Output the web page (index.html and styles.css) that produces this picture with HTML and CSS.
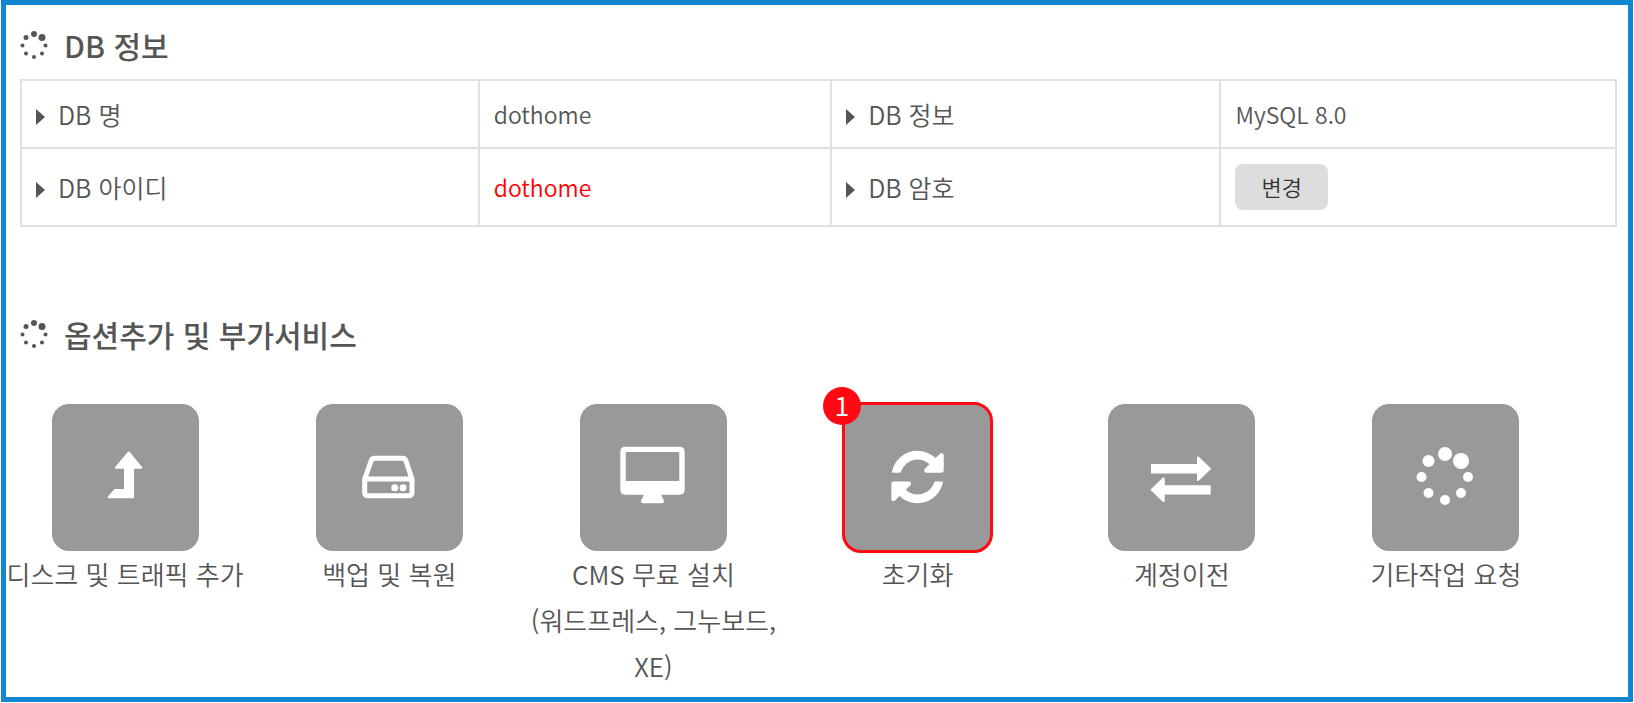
FILE: index.html
```html
<!DOCTYPE html>
<html lang="ko">
<head>
    <meta charset="UTF-8">
    <meta name="viewport" content="width=device-width, initial-scale=1.0">
    <title>DB 정보</title>
    <link rel="stylesheet" href="styles.css">
</head>
<body>
    <svg class="sprite" aria-hidden="true">
        <symbol id="spinner" viewBox="44 43 58 58">
            <circle cx="73" cy="50" r="7"/>
            <circle cx="89" cy="57" r="8"/>
            <circle cx="96" cy="73" r="5"/>
            <circle cx="89" cy="89" r="5"/>
            <circle cx="73" cy="96" r="5"/>
            <circle cx="56.5" cy="89" r="5"/>
            <circle cx="49.5" cy="73" r="5"/>
            <circle cx="56.5" cy="57" r="6"/>
        </symbol>
        <symbol id="spinner-small" viewBox="0 0 28 28">
            <circle cx="14" cy="3" r="3"/>
            <circle cx="22" cy="6.500" r="3.500"/>
            <circle cx="25.500" cy="14.500" r="2"/>
            <circle cx="22" cy="22.500" r="2"/>
            <circle cx="14" cy="26" r="2"/>
            <circle cx="6" cy="22.500" r="2"/>
            <circle cx="2.500" cy="14.500" r="2"/>
            <circle cx="6" cy="6.500" r="2.500"/>
        </symbol>
    </svg>

    <div class="container">
        <h2 class="title"><svg class="title-icon"><use href="#spinner-small"/></svg>DB 정보</h2>
        <table class="db-table">
            <tr>
                <th scope="row" class="col-name">DB 명</th>
                <td class="col-value">dothome</td>
                <th scope="row" class="col-info">DB 정보</th>
                <td>MySQL 8.0</td>
            </tr>
            <tr>
                <th scope="row">DB 아이디</th>
                <td class="user-id">dothome</td>
                <th scope="row">DB 암호</th>
                <td><button type="button" class="change-btn">변경</button></td>
            </tr>
        </table>

        <h2 class="title service-title"><svg class="title-icon"><use href="#spinner-small"/></svg>옵션추가 및 부가서비스</h2>
        <ul class="services">
            <li>
                <a href="#">
                    <span class="tile">
                        <svg viewBox="0 0 147 147">
                            <path class="rounded" d="M76.700 48.500L89.300 63.700H81V93.300H56.500L63 86H73V63.700H64z"/>
                        </svg>
                    </span>
                    디스크 및 트래픽 추가
                </a>
            </li>
            <li>
                <a href="#">
                    <span class="tile">
                        <svg viewBox="0 0 147 147">
                            <path class="line" d="M48.700 75V88.500Q48.700 91.800 52 91.800H92.500Q96 91.800 96 88.500V75L90 57Q89 54.300 86.500 54.300H58.500Q56 54.300 55 57L48.700 75H96"/>
                            <circle cx="78.700" cy="83.700" r="3.500"/>
                            <circle cx="87" cy="83.700" r="3.500"/>
                        </svg>
                    </span>
                    백업 및 복원
                </a>
            </li>
            <li>
                <a href="#">
                    <span class="tile">
                        <svg viewBox="0 0 147 147">
                            <path fill-rule="evenodd" d="M45.500 42.700H99.500Q104.700 42.700 104.700 48V85.500Q104.700 90.700 99.500 90.700H81.500Q81.500 93 83 94.500Q84 96 84 97.500Q84 99.300 82 99.300H63Q61 99.300 61 97.500Q61 96 62 94.500Q63.500 93 63.500 90.700H45.500Q40.300 90.700 40.300 85.500V48Q40.300 42.700 45.500 42.700zM47 48Q45.700 48 45.700 49.300V77H99.300V49.300Q99.300 48 98 48z"/>
                        </svg>
                    </span>
                    CMS 무료 설치<br>(워드프레스, 그누보드, XE)
                </a>
            </li>
            <li>
                <a href="#">
                    <span class="tile selected">
                        <span class="badge">1</span>
                        <svg viewBox="0 0 147 147">
                            <path transform="translate(43 42.500) scale(.0341)" d="M1639 1056q0 5-1 7-64 268-268 434.500t-478 166.500q-146 0-282.500-55t-243.500-157l-129 129q-19 19-45 19t-45-19-19-45v-448q0-26 19-45t45-19h448q26 0 45 19t19 45-19 45l-137 137q71 66 161 102t187 36q134 0 250-65t186-179q11-17 53-117 8-23 30-23h192q13 0 22.500 9.500t9.500 22.500zm25-800v448q0 26-19 45t-45 19h-448q-26 0-45-19t-19-45 19-45l138-138q-148-137-349-137-134 0-250 65t-186 179q-11 17-53 117-8 23-30 23h-199q-13 0-22.500-9.500t-9.500-22.500v-7q65-268 270-434.500t480-166.500q146 0 284 55.500t245 156.500l130-129q19-19 45-19t45 19 19 45z"/>
                        </svg>
                    </span>
                    초기화
                </a>
            </li>
            <li>
                <a href="#">
                    <span class="tile">
                        <svg viewBox="0 0 147 147">
                            <path d="M43 60H89V53.500Q89 52 91 53L103.300 64.700L91 76.500Q89 77.500 89 76V69.500H43zM102.700 81.300V90.500H56.700V97Q56.700 98.500 54.500 97.500L42.300 85.700L54.500 74Q56.700 73 56.700 74.500V81.300z"/>
                        </svg>
                    </span>
                    계정이전
                </a>
            </li>
            <li>
                <a href="#">
                    <span class="tile">
                        <svg viewBox="0 0 147 147"><use href="#spinner" x="44" y="43" width="58" height="58"/></svg>
                    </span>
                    기타작업 요청
                </a>
            </li>
        </ul>
    </div>
</body>
</html>
```
FILE: styles.css
```css
* {
    box-sizing: border-box;
}
body {
    margin: 0 1px;
    background-color: #fff;
    color: #555;
    font-family: "Noto Sans CJK KR", sans-serif;
    font-size: 26px;
    font-weight: 350;
    line-height: 46px;
    word-break: keep-all;
}
.sprite {
    display: none;
}
.container {
    border: 5px solid #1287d1;
    padding: 18px 0 8px;
}
.title {
    display: flex;
    align-items: center;
    gap: 16px;
    margin: 0 14px 12px;
    font-size: 30px;
    font-weight: 500;
    line-height: 44px;
}
.title-icon {
    width: 28px;
    height: 28px;
    fill: #555;
}
.db-table {
    width: calc(100% - 25px);
    margin: 0 11px 0 14px;
    border-collapse: collapse;
    table-layout: fixed;
}
.db-table th, .db-table td {
    padding: 10px 14px;
    border: 2px solid #e0e0e0;
    text-align: left;
}
.db-table th {
    font-size: 25px;
    font-weight: inherit;
}
.db-table td {
    font-size: 23px;
}
.db-table th::before {
    content: "";
    display: inline-block;
    margin-right: 13px;
    border: solid transparent;
    border-width: 8px 0 8px 9px;
    border-left-color: #555;
}
.col-name {
    width: 28.7%;
}
.col-value {
    width: 22.1%;
}
.col-info {
    width: 24.4%;
}
.db-table .user-id {
    color: #f00;
}
.change-btn {
    display: block;
    margin: 5px 0;
    padding: 0 26px 2px;
    border: 0;
    border-radius: 8px;
    background-color: #ddd;
    color: #333;
    font: inherit;
    font-size: 22px;
    line-height: 44px;
    cursor: pointer;
}
.service-title {
    margin-top: 85px;
    margin-bottom: 48px;
}
.services {
    display: grid;
    grid-template-columns: repeat(6, 1fr);
    margin: 0 50px 0 -13px;
    padding: 0;
    list-style: none;
    text-align: center;
}
.services li {
    padding: 0 4px;
}
.services a {
    display: block;
    color: inherit;
    text-decoration: none;
}
.tile {
    display: block;
    position: relative;
    width: 147px;
    height: 147px;
    margin: 0 auto;
    border-radius: 17px;
    background-color: #999;
}
.tile svg {
    display: block;
    fill: #fff;
}
.rounded {
    stroke: #fff;
    stroke-width: 2;
    stroke-linejoin: round;
}
.line {
    fill: none;
    stroke: #fff;
    stroke-width: 5;
    stroke-linejoin: round;
}
.selected {
    outline: 3px solid #ff0a12;
    outline-offset: -1px;
}
.badge {
    position: absolute;
    top: -17px;
    left: -21px;
    width: 38px;
    height: 38px;
    border-radius: 50%;
    background-color: #ff0a12;
    color: #fff;
    font-weight: 400;
    line-height: 36px;
}
```
